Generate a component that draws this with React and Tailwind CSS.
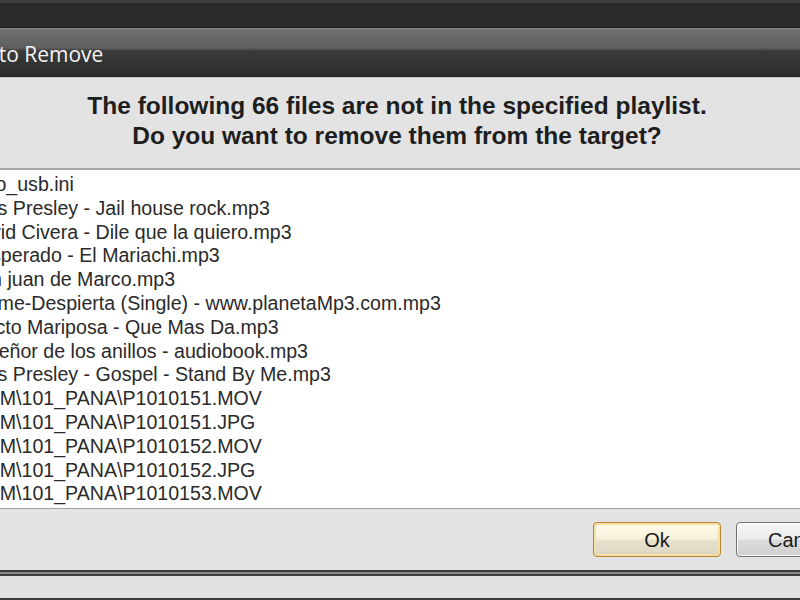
import React from "react";

const files = [
  "Auto_usb.ini",
  "Elvis Presley - Jail house rock.mp3",
  "David Civera - Dile que la quiero.mp3",
  "Desperado - El Mariachi.mp3",
  "Don juan de Marco.mp3",
  "Dorme-Despierta (Single) - www.planetaMp3.com.mp3",
  "Efecto Mariposa - Que Mas Da.mp3",
  "El señor de los anillos - audiobook.mp3",
  "Elvis Presley - Gospel - Stand By Me.mp3",
  "DCIM\\101_PANA\\P1010151.MOV",
  "DCIM\\101_PANA\\P1010151.JPG",
  "DCIM\\101_PANA\\P1010152.MOV",
  "DCIM\\101_PANA\\P1010152.JPG",
  "DCIM\\101_PANA\\P1010153.MOV",
];

export default function App() {
  return (
    <div className="w-[800px] h-[600px] overflow-hidden bg-[#e3e3e3] flex flex-col" style={{ fontFamily: "'Liberation Sans', Arial, sans-serif" }}>
      {/* outer window top */}
      <div className="h-[3px] bg-[#3d3d3d]" />
      <div className="h-[24px] bg-[#2a2a2a]" />
      <div className="h-[1px] bg-[#1c1c1c]" />
      {/* title bar */}
      <div className="h-[49px] flex flex-col bg-[linear-gradient(to_bottom,#8a8a8a_0px,#707070_2px,#5e5e5e_20px,#3a3a3a_23px,#2c2c2c_48px)] border-b border-[#1e1e1e]">
        <div className="flex items-center h-full overflow-hidden">
          <span className="ml-[-50px] mt-[6px] text-[21px] text-[#f4f4f4] whitespace-nowrap" style={{ fontFamily: "'Open Sans', 'Noto Sans', sans-serif" }}>
            Files to Remove
          </span>
        </div>
      </div>
      {/* message area */}
      <div className="h-[91px] border-t border-[#c8c8c8] flex flex-col items-center justify-center pb-[4px]">
        <p className="text-[24.5px] font-bold text-[#1e1e1e] leading-[30px] text-center ml-[-6px] whitespace-nowrap">
          The following 66 files are not in the specified playlist.
        </p>
        <p className="text-[24.5px] font-bold text-[#1e1e1e] leading-[30px] text-center ml-[-6px] whitespace-nowrap">
          Do you want to remove them from the target?
        </p>
      </div>
      {/* list */}
      <div className="h-[341px] bg-white border-t-2 border-b border-t-[#a6a6a6] border-b-[#a0a0a0] overflow-hidden pt-[3px]">
        <ul className="ml-[-34px]">
          {files.map((f, i) => (
            <li key={i} className="h-[23.8px] leading-[23.8px] text-[19.6px] text-[#2a2a2a] whitespace-nowrap">
              {f}
            </li>
          ))}
        </ul>
      </div>
      {/* buttons area */}
      <div className="h-[61px] flex items-start pt-[13px] gap-[15px] pl-[593px]">
        <button className="shrink-0 w-[128px] h-[35px] rounded-[4px] border border-[#b8862e] bg-[linear-gradient(to_bottom,#fffbe8_0%,#f7f1dc_48%,#e8e2cf_52%,#ddd6c2_100%)] shadow-[inset_0_0_0_2px_#f6dfa3] text-[20px] text-[#1a1a1a]">
          Ok
        </button>
        <button className="shrink-0 w-[128px] h-[35px] rounded-[4px] border border-[#707070] bg-[linear-gradient(to_bottom,#f6f6f6_0%,#ececec_48%,#dcdcdc_52%,#cfcfcf_100%)] shadow-[inset_0_0_0_1px_#fcfcfc] text-[20px] text-[#1a1a1a] text-left pl-[31px]">
          Cancel
        </button>
      </div>
      {/* bottom borders */}
      <div className="h-[2px] bg-[#3a3a3a]" />
      <div className="h-[2px] bg-[#8c8c8c]" />
      <div className="h-[2px] bg-[#3e3e3e]" />
      <div className="flex-1 bg-[#e1e1e1]" />
      <div className="h-[2px] bg-[#3a3a3a]" />
    </div>
  );
}
